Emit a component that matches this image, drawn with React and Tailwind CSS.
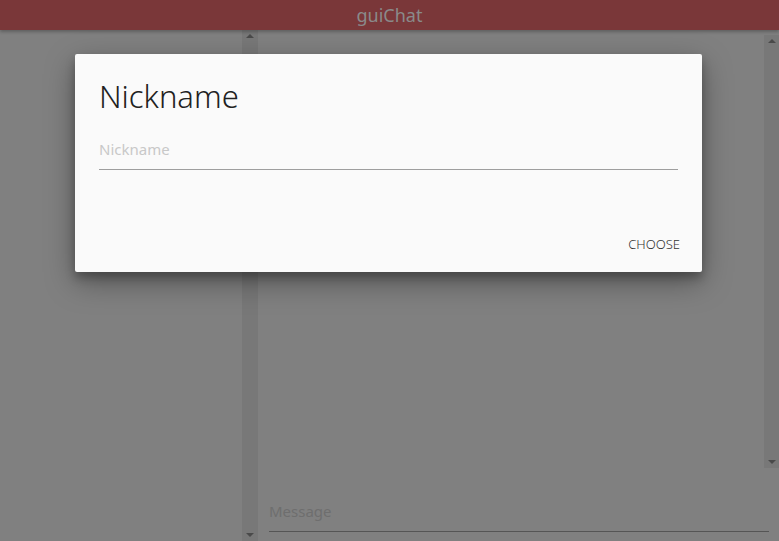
import React from "react";

function ScrollBar({ className }) {
  return (
    <div className={`flex flex-col justify-between items-center bg-[#787878] py-[4px] ${className}`}>
      <span className="w-0 h-0 border-x-[4px] border-x-transparent border-b-[4px] border-b-[#4a4a4a]" />
      <span className="w-0 h-0 border-x-[4px] border-x-transparent border-t-[4px] border-t-[#4a4a4a]" />
    </div>
  );
}

export default function App() {
  return (
    <div className="relative w-[779px] h-[541px] overflow-hidden bg-[#808080] font-['Noto_Sans','Open_Sans',sans-serif]">
      <div className="h-[30px] bg-[#7a3739] flex items-center justify-center text-[18px] text-[#8a8a8a] shadow-[0_2px_3px_rgba(0,0,0,0.25)] relative z-10">
        guiChat
      </div>

      <div className="flex h-[511px]">
        <div className="w-[242px]" />
        <ScrollBar className="w-[16px] h-full" />
        <div className="flex-1 flex flex-col pt-[5px]">
          <div className="flex-1 flex justify-end">
            <ScrollBar className="w-[15px] h-[433px]" />
          </div>
          <div className="ml-[11px] mr-[10px] mb-[9px] border-b border-[#555555] pb-[9px] text-[15px] text-[#6e6e6e]">
            Message
          </div>
        </div>
      </div>

      <div className="absolute left-[75px] top-[54px] w-[627px] h-[218px] bg-[#fafafa] rounded-[2px] shadow-[0_10px_30px_rgba(0,0,0,0.35),0_6px_10px_rgba(0,0,0,0.25)] z-20 flex flex-col px-[24px]">
        <div className="pt-[22px] text-[31px] leading-[40px] text-[#212121] font-light">Nickname</div>
        <div className="mt-[22px] border-b border-[#9e9e9e] pb-[8px] text-[15px] text-[#c8c8c8]">Nickname</div>
        <div className="flex-1 flex items-end justify-end pb-[18px] -mr-[2px]">
          <span className="text-[13px] text-[#333333] font-light">CHOOSE</span>
        </div>
      </div>
    </div>
  );
}
